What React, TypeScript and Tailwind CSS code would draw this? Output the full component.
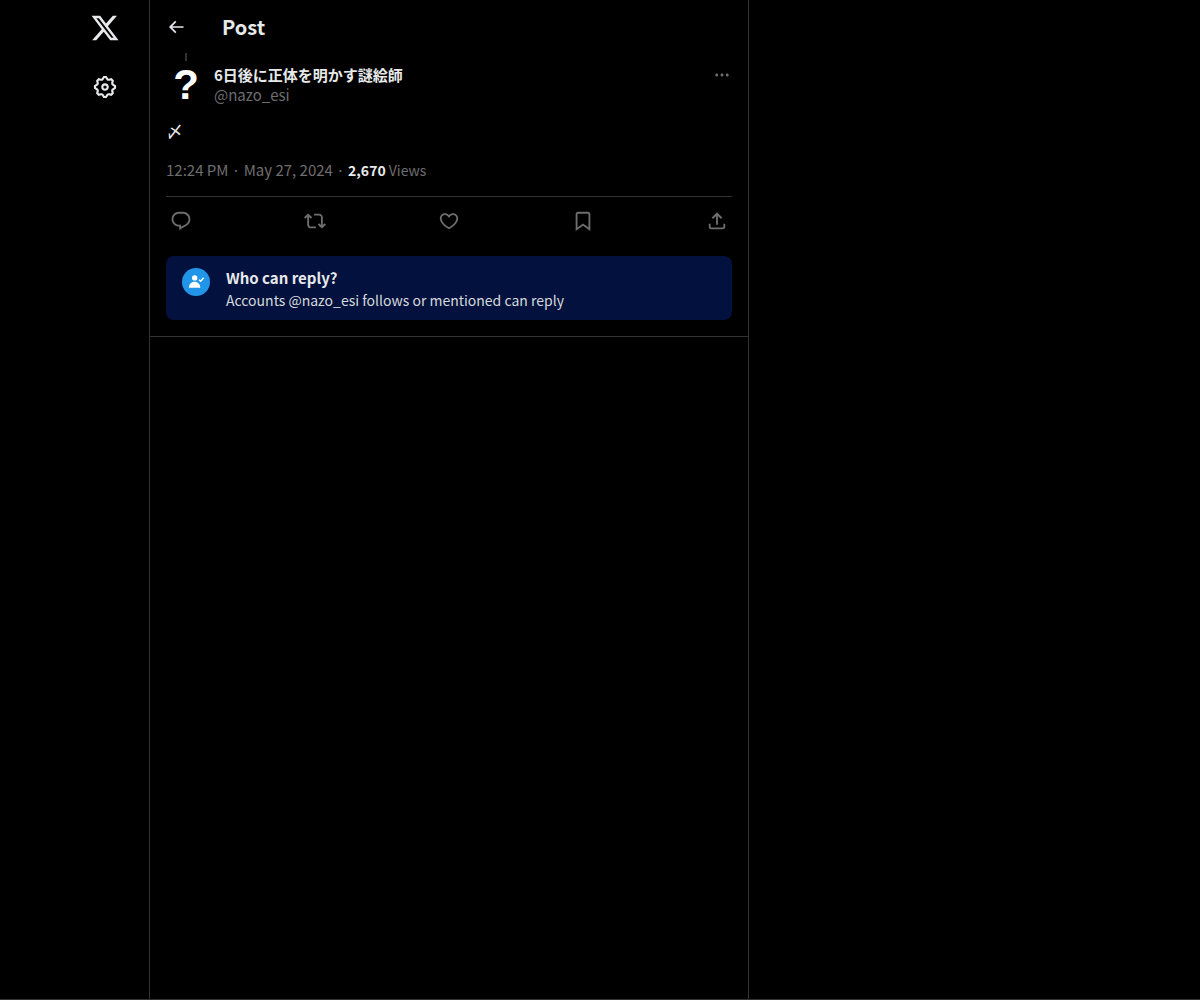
import type { ReactNode } from "react";

const paths = {
  logo: "M18.244 2.25h3.308l-7.227 8.26 8.502 11.24H16.17l-5.214-6.817L4.99 21.75H1.68l7.73-8.835L1.254 2.25H8.08l4.713 6.231zm-1.161 17.52h1.833L7.084 4.126H5.117z",
  settings:
    "M10.54 1.75h2.92l1.57 2.36c.11.17.32.25.53.21l2.53-.59 2.17 2.17-.58 2.54c-.05.2.04.41.21.53l2.36 1.57v2.92l-2.36 1.57c-.17.12-.26.33-.21.53l.58 2.54-2.17 2.17-2.53-.59c-.21-.04-.42.04-.53.21l-1.57 2.36h-2.92l-1.58-2.36c-.11-.17-.32-.25-.52-.21l-2.54.59-2.17-2.17.58-2.54c.05-.2-.03-.41-.21-.53l-2.35-1.57v-2.92L4.1 8.97c.18-.12.26-.33.21-.53L3.73 5.9 5.9 3.73l2.54.59c.2.04.41-.04.52-.21l1.58-2.36zm1.07 2l-.98 1.47C10.05 6.08 9 6.5 7.99 6.27l-1.46-.34-.6.6.33 1.46c.24 1.01-.18 2.07-1.05 2.64l-1.46.98v.78l1.46.98c.87.57 1.29 1.63 1.05 2.64l-.33 1.46.6.6 1.46-.34c1.01-.23 2.06.19 2.64 1.05l.98 1.47h.78l.97-1.47c.58-.86 1.63-1.28 2.65-1.05l1.45.34.61-.6-.34-1.46c-.23-1.01.18-2.07 1.05-2.64l1.47-.98v-.78l-1.47-.98c-.87-.57-1.28-1.63-1.05-2.64l.34-1.46-.61-.6-1.45.34c-1.02.23-2.07-.19-2.65-1.05l-.97-1.47h-.78zM12 10.5c-.83 0-1.5.67-1.5 1.5s.67 1.5 1.5 1.5c.82 0 1.5-.67 1.5-1.5s-.68-1.5-1.5-1.5zM8.5 12c0-1.93 1.56-3.5 3.5-3.5 1.93 0 3.5 1.57 3.5 3.5s-1.57 3.5-3.5 3.5c-1.94 0-3.5-1.57-3.5-3.5z",
  back: "M7.414 13l5.043 5.04-1.414 1.42L3.586 12l7.457-7.46 1.414 1.42L7.414 11H21v2H7.414z",
  more: "M3 12c0-1.1.9-2 2-2s2 .9 2 2-.9 2-2 2-2-.9-2-2zm9 2c1.1 0 2-.9 2-2s-.9-2-2-2-2 .9-2 2 .9 2 2 2zm7 0c1.1 0 2-.9 2-2s-.9-2-2-2-2 .9-2 2 .9 2 2 2z",
  reply:
    "M1.751 10c0-4.42 3.584-8 8.005-8h4.366c4.49 0 8.129 3.64 8.129 8.13 0 2.96-1.607 5.68-4.196 7.11l-8.054 4.46v-3.69h-.067c-4.49.1-8.183-3.51-8.183-8.01zm8.005-6c-3.317 0-6.005 2.69-6.005 6 0 3.37 2.77 6.08 6.138 6.01l.351-.01h1.761v2.3l5.087-2.81c1.951-1.08 3.163-3.13 3.163-5.36 0-3.39-2.744-6.13-6.129-6.13H9.756z",
  repost:
    "M4.5 3.88l4.432 4.14-1.364 1.46L5.5 7.55V16c0 1.1.896 2 2 2H13v2H7.5c-2.209 0-4-1.79-4-4V7.55L1.432 9.48.068 8.02 4.5 3.88zM16.5 6H11V4h5.5c2.209 0 4 1.79 4 4v8.45l2.068-1.93 1.364 1.46-4.432 4.14-4.432-4.14 1.364-1.46 2.068 1.93V8c0-1.1-.896-2-2-2z",
  like: "M16.697 5.5c-1.222-.06-2.679.51-3.89 2.16l-.805 1.09-.806-1.09C9.984 6.01 8.526 5.44 7.304 5.5c-1.243.07-2.349.78-2.91 1.91-.552 1.12-.633 2.78.479 4.82 1.074 1.97 3.257 4.27 7.129 6.61 3.87-2.34 6.052-4.64 7.126-6.61 1.111-2.04 1.03-3.7.477-4.82-.561-1.13-1.666-1.84-2.908-1.91zm4.187 7.69c-1.351 2.48-4.001 5.12-8.379 7.67l-.503.3-.504-.3c-4.379-2.55-7.029-5.19-8.382-7.67-1.36-2.5-1.41-4.86-.514-6.67.887-1.79 2.647-2.91 4.601-3.01 1.651-.09 3.368.56 4.798 2.01 1.429-1.45 3.146-2.1 4.796-2.01 1.954.1 3.714 1.22 4.601 3.01.896 1.81.846 4.17-.514 6.67z",
  bookmark:
    "M4 4.5C4 3.12 5.119 2 6.5 2h11C18.881 2 20 3.12 20 4.5v18.44l-8-5.71-8 5.71V4.5zM6.5 4c-.276 0-.5.22-.5.5v14.56l6-4.29 6 4.29V4.5c0-.28-.224-.5-.5-.5h-11z",
  share:
    "M12 2.59l5.7 5.7-1.41 1.42L13 6.41V16h-2V6.41l-3.3 3.3-1.41-1.42L12 2.59zM21 15l-.02 3.51c0 1.38-1.12 2.49-2.5 2.49H5.5C4.11 21 3 19.88 3 18.5V15h2v3.5c0 .28.22.5.5.5h12.98c.28 0 .5-.22.5-.5L19 15h2z",
};

type IconName = keyof typeof paths;

function Icon({ name, className }: { name: IconName; className: string }) {
  return (
    <svg viewBox="0 0 24 24" fill="currentColor" aria-hidden="true" className={className}>
      <path d={paths[name]} />
    </svg>
  );
}

function IconButton({ label, children }: { label: string; children: ReactNode }) {
  return (
    <button type="button" aria-label={label} className="cursor-pointer hover:opacity-80">
      {children}
    </button>
  );
}

const actions: { name: IconName; label: string }[] = [
  { name: "reply", label: "Reply" },
  { name: "repost", label: "Repost" },
  { name: "like", label: "Like" },
  { name: "bookmark", label: "Bookmark" },
  { name: "share", label: "Share post" },
];

function SideBar() {
  return (
    <header className="w-[149px] shrink-0 flex flex-col items-end gap-[27px] pt-3 pr-7">
      <a href="/" aria-label="X" className="flex size-8 items-center justify-center">
        <Icon name="logo" className="size-[30px]" />
      </a>
      <a href="/settings" aria-label="Settings" className="flex size-8 items-center justify-center">
        <Icon name="settings" className="size-[26px]" />
      </a>
    </header>
  );
}

function ReplyNotice() {
  return (
    <div className="flex gap-4 rounded-lg bg-[#02113d] px-4 pt-3 pb-2.5">
      <svg viewBox="0 0 28 28" className="size-7 shrink-0" aria-hidden="true">
        <circle cx="14" cy="14" r="14" fill="#2196e8" />
        <circle cx="12.7" cy="9.9" r="2.7" fill="#fff" />
        <path d="M6.9 19.8c.2-3.8 2.3-6.1 5.7-6.1s5.5 2.3 5.7 6.1z" fill="#fff" />
        <path d="M17 11.8l1.7 1.5 2.9-3.6" fill="none" stroke="#fff" strokeWidth="1.4" />
      </svg>
      <div className="flex flex-col gap-0.5">
        <h2 className="text-[15px] leading-5 font-bold text-[#e7e9ea]">Who can reply?</h2>
        <p className="text-sm leading-5 text-[#d6d9db]">
          Accounts @nazo_esi follows or mentioned can reply
        </p>
      </div>
    </div>
  );
}

function Post() {
  return (
    <article className="flex flex-col border-b border-[#333333] px-4 pb-4">
      {/* Thread line to the parent post */}
      <div className="flex w-10 justify-center pb-1">
        <div className="h-2 w-[2px] bg-[#333333]" />
      </div>

      <div className="flex gap-2">
        <div className="flex size-10 shrink-0 items-center justify-center rounded-full font-['Liberation_Sans',sans-serif] text-[42px] leading-10 font-bold text-white">
          ?
        </div>
        <div className="flex min-w-0 grow flex-col text-[15px] leading-5">
          <a href="/nazo_esi" className="font-bold">
            6日後に正体を明かす謎絵師
          </a>
          <a href="/nazo_esi" className="text-[#6e6e6e]">
            @nazo_esi
          </a>
        </div>
        <div className="flex h-5 w-5 items-center justify-center text-[#6e6e6e]">
          <IconButton label="More">
            <Icon name="more" className="size-[18px]" />
          </IconButton>
        </div>
      </div>

      <p className="pt-3 text-[17px] leading-[27px]">〆</p>

      <div className="py-4 text-[15px] leading-5 text-[#6e6e6e]">
        <a href="/nazo_esi/status">12:24 PM · May 27, 2024</a>
        {" · "}
        <span className="text-sm leading-5">
          <span className="font-bold text-[#e7e9ea]">2,670</span> Views
        </span>
      </div>

      <div className="mb-3 flex h-12 items-center justify-between border-t border-[#333333] px-1 text-[#6e6e6e]">
        {actions.map((action) => (
          <IconButton key={action.name} label={action.label}>
            <Icon name={action.name} className="size-[22px]" />
          </IconButton>
        ))}
      </div>

      <ReplyNotice />
    </article>
  );
}

export default function App() {
  return (
    <div className="flex min-h-screen border-b border-[#333333] bg-black font-['Noto_Sans_CJK_JP',sans-serif] text-[#e7e9ea]">
      <SideBar />
      <main className="w-full max-w-[600px] border-x border-[#333333]">
        <div className="flex h-[53px] items-center gap-9 px-4">
          <IconButton label="Back">
            <Icon name="back" className="size-5" />
          </IconButton>
          <h1 className="text-xl font-bold">Post</h1>
        </div>
        <Post />
      </main>
    </div>
  );
}
